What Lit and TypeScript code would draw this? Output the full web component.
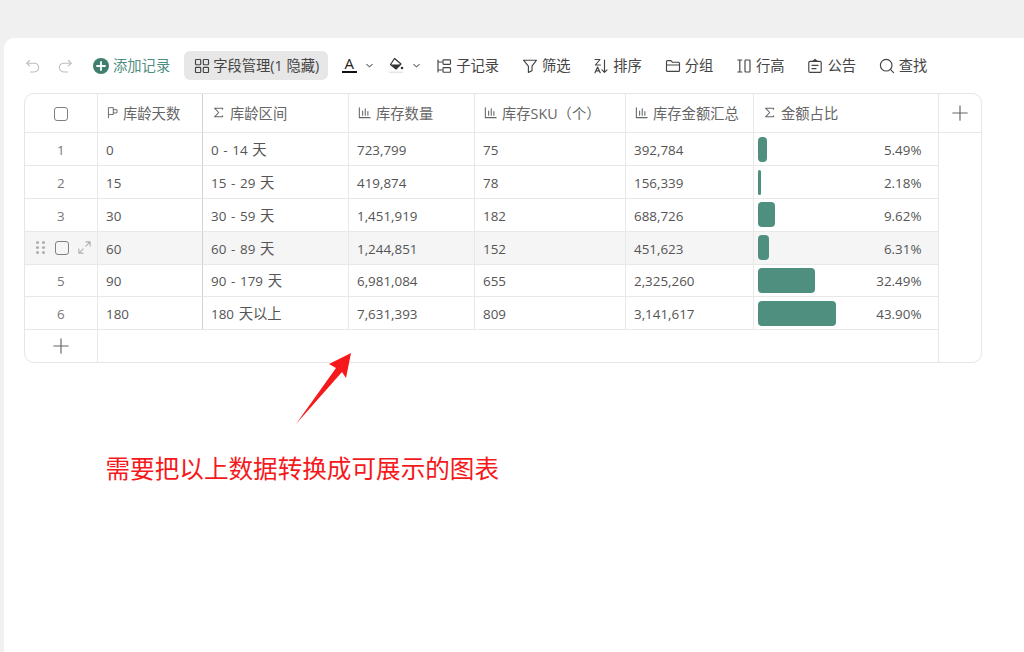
import { LitElement, html, css, svg } from "lit";
import { customElement } from "lit/decorators.js";

const stroke = (inner: unknown, size = 16, vb = 16) => html`<svg class="ic" width=${size} height=${size} viewBox="0 0 ${vb} ${vb}" fill="none" stroke="currentColor" stroke-width="1.15" stroke-linecap="round" stroke-linejoin="round">${inner}</svg>`;

const icons = {
  undo: svg`<path d="M4.5 2.5 1.8 5.2l2.7 2.7"/><path d="M2 5.2h7.2a4.4 4.4 0 0 1 0 8.8H5.5"/>`,
  redo: svg`<path d="M11.5 2.5l2.7 2.7-2.7 2.7"/><path d="M14 5.2H6.8a4.4 4.4 0 0 0 0 8.8h3.7"/>`,
  grid: svg`<rect x="1.5" y="1.5" width="5.2" height="5.2" rx=".7"/><rect x="9.3" y="1.5" width="5.2" height="5.2" rx=".7"/><rect x="1.5" y="9.3" width="5.2" height="5.2" rx=".7"/><rect x="9.3" y="9.3" width="5.2" height="5.2" rx=".7"/>`,
  sub: svg`<path d="M2 2v12M2 4h4M2 12h4"/><rect x="7" y="1.8" width="7.5" height="4.6" rx=".8"/><rect x="7" y="9.6" width="7.5" height="4.6" rx=".8"/>`,
  filter: svg`<path d="M1.5 2.2h13L10 8.2v4.6l-3.6 1.6V8.2z"/>`,
  group: svg`<path d="M1.5 3.6c0-.6.4-1 1-1h3.4l1.4 1.6h6.2c.6 0 1 .4 1 1v7.2c0 .6-.4 1-1 1H2.5c-.6 0-1-.4-1-1z"/><path d="M1.5 7h13"/>`,
  height: svg`<path d="M1.8 2h4M1.8 14h4M3.8 2v12"/><rect x="9" y="2" width="5" height="12" rx=".8"/>`,
  notice: svg`<rect x="1.8" y="3.4" width="12.4" height="11" rx="1.2"/><path d="M5.6 3.4 8 1.4l2.4 2M5 7.4h6M5 10.6h4"/>`,
  search: svg`<circle cx="7.2" cy="7.2" r="5.8"/><path d="m11.4 11.4 3.2 3.2"/>`,
  flag: svg`<path d="M3 14.5V2h6v8.5H3"/><path d="M9 4.5h4.5v4H9"/>`,
  sigma: svg`<path d="M12.4 4.6V3.4H3.8L8.2 8l-4.4 4.6h8.6v-1.2"/>`,
  chart: svg`<path d="M2.5 3v10.5h11.5"/><path d="M6 6.5v4.5M8.8 4v7M11.6 7v4"/>`,
  plus: svg`<path d="M8 .8v14.4M.8 8h14.4"/>`,
  chev: svg`<path d="m3.5 6 4.5 4 4.5-4"/>`,
  expand: svg`<path d="M9.5 2H14v4.5M14 2 9.4 6.6M6.5 14H2V9.5M2 14l4.6-4.6"/>`,
};

const rows = [
  ["1", "0", "0 - 14 天", "723,799", "75", "392,784", 5.49],
  ["2", "15", "15 - 29 天", "419,874", "78", "156,339", 2.18],
  ["3", "30", "30 - 59 天", "1,451,919", "182", "688,726", 9.62],
  ["4", "60", "60 - 89 天", "1,244,851", "152", "451,623", 6.31],
  ["5", "90", "90 - 179 天", "6,981,084", "655", "2,325,260", 32.49],
  ["6", "180", "180 天以上", "7,631,393", "809", "3,141,617", 43.9],
] as const;

const headers = [
  [icons.flag, "库龄天数", "frozen", 13],
  [icons.sigma, "库龄区间", "", 15],
  [icons.chart, "库存数量", "", 15],
  [icons.chart, "库存SKU（个）", "", 15],
  [icons.chart, "库存金额汇总", "", 15],
  [icons.sigma, "金额占比", "", 15],
] as const;

const tools = [
  [icons.sub, "子记录"],
  [icons.filter, "筛选"],
  [null, "排序"],
  [icons.group, "分组"],
  [icons.height, "行高"],
  [icons.notice, "公告"],
  [icons.search, "查找"],
] as const;

/* Digits sit a size below the Chinese glyphs, so CJK runs get their own span. */
const mixed = (text: string) =>
  text.split(/([\u4e00-\u9fff]+)/).map((part, i) => (i % 2 ? html`<span class="cjk">${part}</span>` : part));

@customElement("app-root")
export class AppRoot extends LitElement {
  static styles = css`
    :host {
      display: block;
      height: 652px;
      overflow: hidden;
      background: #f0f0f0;
      font-family: "Open Sans", "Noto Sans CJK SC", sans-serif;
      font-size: 14.3px;
      color: #555;
    }
    .panel {
      position: relative;
      margin: 38px 0 0 4px;
      height: 614px;
      background: #fff;
      border-top-left-radius: 10px;
      padding: 13px 0 0 20px;
      box-sizing: border-box;
    }
    .ic { display: block; flex: none; }
    .toolbar {
      display: flex;
      align-items: center;
      height: 29px;
      margin-bottom: 13px;
      color: #444;
      white-space: nowrap;
    }
    .toolbar span { margin-top: -2px; }
    .undo { display: flex; gap: 16px; color: #bdbdbd; margin: 0 20px 0 1px; }
    .add { display: flex; align-items: center; gap: 4px; color: #4f8f7f; margin-right: 14px; }
    .fields {
      display: flex; align-items: center; gap: 3px;
      height: 29px; width: 144px; padding-left: 10px; box-sizing: border-box;
      background: #e7e7e7; border-radius: 6px; color: #444;
      margin-right: 13px;
    }
    .swatch { display: flex; align-items: center; gap: 7px; width: 47px; }
    .swatch .ic.small { color: #666; }
    .color-a {
      display: flex; flex-direction: column; align-items: center; width: 16px;
      font-size: 15px; line-height: 14px; color: #222; margin-top: -2px;
    }
    .color-a i { display: block; width: 15px; height: 2.5px; background: #111; margin-top: 1px; }
    .tool { display: flex; align-items: center; gap: 4px; margin-right: 22.8px; }
    .tools { display: flex; margin-left: 1px; }

    .table {
      display: grid;
      grid-template-columns: 72.5px 105px 146px 126px 151px 128px 185px 1fr;
      grid-template-rows: 39.4px repeat(6, 32.8px) 31.5px;
      width: 958px;
      box-sizing: border-box;
      border: 1px solid #e6e6e6;
      border-radius: 10px;
      overflow: hidden;
    }
    .cell {
      display: flex; align-items: center; gap: 4px;
      padding: 2px 8.5px 0;
      box-sizing: border-box;
      border-right: 1px solid #e8e8e8;
      border-bottom: 1px solid #e8e8e8;
      white-space: nowrap;
      min-width: 0;
      font-size: 13.4px;
    }
    .value { display: block; word-spacing: 1.2px; line-height: 18px; }
    .cjk { font-size: 14.3px; line-height: 0; }
    .frozen { border-right-color: #d2d2d2; }
    .head { color: #666; font-size: 14.3px; padding: 0 8.5px 2px; }
    .head .ic { color: #666; }
    .num { justify-content: center; color: #777; padding: 2px 0 0; }
    .last { border-right: none; }
    .plus { justify-content: center; padding: 0; color: #666; }
    .filler { grid-column: 8; grid-row: 2 / span 7; }
    .addwide { grid-column: 2 / span 6; border-bottom: none; }
    .addnum { border-bottom: none; }
    .hover { background: #f5f5f5; }
    .check { width: 14px; height: 14px; border: 1.2px solid #808080; border-radius: 3px; box-sizing: border-box; }
    .rowtools { padding: 0 0 0 11px; gap: 10px; color: #b0b0b0; }
    .rowtools .ic { margin-left: -2px; }
    .dots { display: grid; grid-template-columns: 3px 3px; gap: 2px 3px; }
    .dots i { width: 3px; height: 3px; border-radius: 50%; background: #b0b0b0; }
    .pct { padding: 0 16px 0 4px; justify-content: space-between; }
    .bar { height: 25px; background: #4f8f7f; border-radius: 4px; }
    .pct span { padding-top: 2px; }

    .arrow { position: absolute; left: 0; top: 0; pointer-events: none; }
    .note {
      position: absolute; left: 101.5px; top: 412px;
      font-size: 24.6px; line-height: 34px; color: #f5191c;
      font-family: "Noto Sans CJK SC", sans-serif; white-space: nowrap;
    }
  `;

  render() {
    return html`<div class="panel">
      <div class="toolbar">
        <div class="undo">${stroke(icons.undo)}${stroke(icons.redo)}</div>
        <div class="add">
          <svg class="ic" width="16" height="16" viewBox="0 0 16 16"><circle cx="8" cy="8" r="8" fill="#3f7f6f"/><path d="M8 4v8M4 8h8" stroke="#fff" stroke-width="1.8" stroke-linecap="round"/></svg>
          <span>添加记录</span>
        </div>
        <div class="fields">${stroke(icons.grid)}<span>字段管理(1 隐藏)</span></div>
        <div class="swatch">
          <div class="color-a">A<i></i></div>
          <svg class="ic small" width="11" height="11" viewBox="0 0 16 16" fill="none" stroke="currentColor" stroke-width="1.5">${icons.chev}</svg>
        </div>
        <div class="swatch">
          <svg class="ic" width="16" height="17" viewBox="0 0 16 17"><path d="M6.5 1.5 13 7l-5 5L2.5 7.5z" fill="none" stroke="#333" stroke-width="1.2" stroke-linejoin="round"/><path d="M3 7.5h9.5L8 12z" fill="#333"/><circle cx="14" cy="11" r="1.3" fill="#333"/><rect x="1" y="14.5" width="14" height="1.6" fill="#e6e6e6"/></svg>
          <svg class="ic small" width="11" height="11" viewBox="0 0 16 16" fill="none" stroke="currentColor" stroke-width="1.5">${icons.chev}</svg>
        </div>
        <div class="tools">
          ${tools.map(([icon, label]) => html`<div class="tool">
            ${icon
              ? stroke(icon)
              : html`<svg class="ic" width="16" height="16" viewBox="0 0 16 16" fill="none" stroke="currentColor" stroke-width="1.15" stroke-linecap="round" stroke-linejoin="round"><path d="M2 1.5h5L2.4 7H7.4M2 14.8 4.6 9l2.6 5.8M2.9 12.8h3.4M11.5 2v12.3M9 11.8l2.5 2.6 2.5-2.6"/></svg>`}
            <span>${label}</span>
          </div>`)}
        </div>
      </div>

      <div class="table">
        <div class="cell num"><div class="check"></div></div>
        ${headers.map(([icon, label, cls, size]) => html`<div class="cell head ${cls}">${stroke(icon, size, 16)}<span>${label}</span></div>`)}
        <div class="cell plus last">${stroke(icons.plus, 16)}</div>

        ${rows.map((r, i) => {
          const hover = i === 3 ? "hover" : "";
          return html`
            ${i === 3
              ? html`<div class="cell rowtools hover">
                  <div class="dots"><i></i><i></i><i></i><i></i><i></i><i></i></div>
                  <div class="check"></div>
                  ${stroke(icons.expand, 15)}
                </div>`
              : html`<div class="cell num">${r[0]}</div>`}
            <div class="cell frozen ${hover}">${r[1]}</div>
            <div class="cell ${hover}"><span class="value">${mixed(r[2])}</span></div>
            <div class="cell ${hover}">${r[3]}</div>
            <div class="cell ${hover}">${r[4]}</div>
            <div class="cell ${hover}">${r[5]}</div>
            <div class="cell pct ${hover}">
              <div class="bar" style="width:${(r[6] as number) * 1.78}px"></div>
              <span>${(r[6] as number).toFixed(2)}%</span>
            </div>
          `;
        })}

        <div class="cell plus addnum">${stroke(icons.plus, 16)}</div>
        <div class="cell addwide"></div>
        <div class="filler"></div>
      </div>

      <svg class="arrow" width="400" height="400" viewBox="4 38 400 400">
        <path d="M351 353 329 364l7 4-40 56 46-52 4 6z" fill="#f5191c"/>
      </svg>
      <div class="note">需要把以上数据转换成可展示的图表</div>
    </div>`;
  }
}
